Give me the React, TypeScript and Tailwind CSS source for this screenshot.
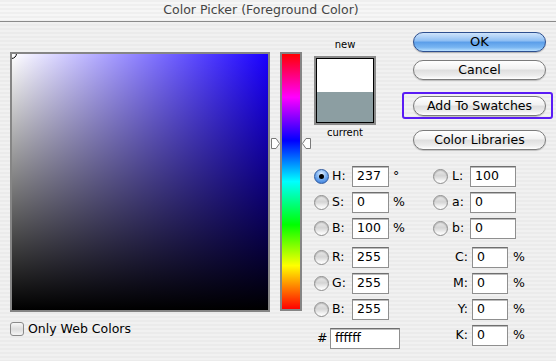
import React from "react";

function Radio({ checked }: { checked?: boolean }) {
  if (checked) {
    return (
      <span className="flex h-[15px] w-[15px] shrink-0 items-center justify-center rounded-full border border-[#2f5a9e] bg-[radial-gradient(circle_at_50%_30%,#e3f1ff,#6aa6ee_55%,#2c6cd1)]">
        <span className="h-[5px] w-[5px] rounded-full bg-black" />
      </span>
    );
  }
  return (
    <span className="h-[15px] w-[15px] shrink-0 rounded-full border border-[#8d8d8d] bg-[linear-gradient(180deg,#e9e9e9,#d4d4d4_45%,#f3f3f3_80%,#ffffff)] shadow-[inset_0_1px_1px_rgba(0,0,0,0.2)]" />
  );
}

function Input({ value, width }: { value: string; width: string }) {
  return (
    <div
      className={`flex h-full items-center border border-[#8f8f8f] border-t-[#6f6f6f] bg-white pl-[4px] shadow-[inset_0_1px_0_#bcbcbc] ${width}`}
    >
      {value}
    </div>
  );
}

function AquaButton({ label, primary }: { label: string; primary?: boolean }) {
  return (
    <div
      className={
        primary
          ? "flex h-[20px] w-[133px] items-center justify-center rounded-full border border-[#2d4f8f] bg-[linear-gradient(180deg,#cfe4fb,#8cbdf3_45%,#5a9de9_50%,#79b6f2_80%,#b8e0ff)] text-[13px] shadow-[0_1px_1px_rgba(0,0,0,0.25)]"
          : "flex h-[20px] w-[133px] items-center justify-center rounded-full border border-[#7b7b7b] bg-[linear-gradient(180deg,#ffffff,#f1f1f1_45%,#dedede_50%,#ececec_80%,#ffffff)] text-[12.5px] shadow-[0_1px_1px_rgba(0,0,0,0.2)]"
      }
    >
      {label}
    </div>
  );
}

export default function App() {
  const hsb = [
    { k: "H:", v: "237", u: "°", on: true },
    { k: "S:", v: "0", u: "%" },
    { k: "B:", v: "100", u: "%" },
  ];
  const rgb = [
    { k: "R:", v: "255" },
    { k: "G:", v: "255" },
    { k: "B:", v: "255" },
  ];
  const lab = [
    { k: "L:", v: "100" },
    { k: "a:", v: "0" },
    { k: "b:", v: "0" },
  ];
  const cmyk = ["C:", "M:", "Y:", "K:"];

  return (
    <div className="flex h-[361px] w-[556px] flex-col overflow-hidden bg-[repeating-linear-gradient(180deg,#ebebeb_0px,#ebebeb_2px,#f1f1f1_2px,#f1f1f1_4px)] font-['DejaVu_Sans',sans-serif] text-[12.5px] text-black">
      <div className="flex h-[22px] shrink-0 items-center justify-center border-b border-[#8a8a8a] bg-[repeating-linear-gradient(180deg,#efefef_0px,#efefef_2px,#f6f6f6_2px,#f6f6f6_4px)] pr-[34px] text-[12.5px] text-[#454545]">
        Color Picker (Foreground Color)
      </div>

      <div className="flex pl-[10px]">
        {/* colour field */}
        <div className="flex flex-col pt-[30px]">
          <div className="relative h-[260px] w-[260px] overflow-hidden border-2 border-[#858585] bg-[image:linear-gradient(180deg,rgba(0,0,0,0),#000),linear-gradient(90deg,#ffffff,#1a00ff)]">
            <span className="absolute -left-[6px] -top-[6px] h-[11px] w-[11px] rounded-full border border-black" />
          </div>
          <div className="mt-[8px] flex items-center gap-[4px]">
            <span className="h-[14px] w-[14px] rounded-[3px] border border-[#8a8a8a] bg-[linear-gradient(180deg,#f7f7f7,#dcdcdc_50%,#f5f5f5)]" />
            <span>Only Web Colors</span>
          </div>
        </div>

        {/* hue slider */}
        <div className="ml-[10px] pt-[30px]">
          <div className="relative h-[259px] w-[22px] border-2 border-[#858585] bg-[linear-gradient(180deg,#ff0000,#ff00ff_17%,#0000ff_34%,#00ffff_50%,#00ff00_67%,#ffff00_83%,#ff0000)]">
            <svg className="absolute -left-[11px] top-[84px]" width="9" height="11" viewBox="0 0 9 11">
              <path d="M0.5 0.5 L5 0.5 L8.5 5.5 L5 10.5 L0.5 10.5 Z" fill="#fff" stroke="#7a7a7a" />
            </svg>
            <svg className="absolute -right-[11px] top-[84px]" width="9" height="11" viewBox="0 0 9 11">
              <path d="M8.5 0.5 L4 0.5 L0.5 5.5 L4 10.5 L8.5 10.5 Z" fill="#fff" stroke="#7a7a7a" />
            </svg>
          </div>
        </div>

        {/* right area */}
        <div className="ml-[12px] flex flex-col">
          <div className="flex h-[128px]">
            <div className="flex w-[62px] flex-col items-center pt-[17px]">
              <span className="text-[10px] leading-[12px]">new</span>
              <div className="mt-[5px] flex h-[69px] w-[62px] flex-col border-2 border-[#8a8a8a]">
                <div className="flex flex-1 flex-col border border-black">
                  <div className="h-[33px] bg-white" />
                  <div className="flex-1 bg-[#8c9ea2]" />
                </div>
              </div>
              <span className="mt-[2px] text-[10px] leading-[12px]">current</span>
            </div>

            <div className="ml-[37px] flex flex-col pt-[10px]">
              <AquaButton label="OK" primary />
              <div className="mt-[8px]">
                <AquaButton label="Cancel" />
              </div>
              <div className="-ml-[11px] mt-[12px] rounded-[3px] border-2 border-[#5a1cf5] pb-[1px] pl-[9px] pr-[5px] pt-[2px]">
                <AquaButton label="Add To Swatches" />
              </div>
              <div className="mt-[11px]">
                <AquaButton label="Color Libraries" />
              </div>
            </div>
          </div>

          <div className="mt-[16px] flex">
            <div className="flex w-[119px] flex-col">
              <div className="flex flex-col gap-[5px]">
                {hsb.map((r) => (
                  <div key={r.k} className="flex h-[21px] items-center">
                    <Radio checked={r.on} />
                    <span className="ml-[3px] w-[20px]">{r.k}</span>
                    <Input value={r.v} width="w-[37px]" />
                    <span className="ml-[4px]">{r.u}</span>
                  </div>
                ))}
              </div>
              <div className="mt-[8px] flex flex-col gap-[5px]">
                {rgb.map((r) => (
                  <div key={r.k} className="flex h-[21px] items-center">
                    <Radio />
                    <span className="ml-[3px] w-[20px]">{r.k}</span>
                    <Input value={r.v} width="w-[37px]" />
                  </div>
                ))}
              </div>
              <div className="mt-[8px] flex h-[21px] items-center">
                <span className="ml-[3px] w-[13px]">#</span>
                <Input value="ffffff" width="w-[70px]" />
              </div>
            </div>

            <div className="flex flex-col">
              <div className="flex flex-col gap-[5px]">
                {lab.map((r) => (
                  <div key={r.k} className="flex h-[21px] items-center">
                    <Radio />
                    <span className="ml-[4px] w-[18px]">{r.k}</span>
                    <Input value={r.v} width="w-[46px]" />
                  </div>
                ))}
              </div>
              <div className="mt-[8px] flex flex-col gap-[5px]">
                {cmyk.map((k) => (
                  <div key={k} className="flex h-[21px] items-center">
                    <span className="w-[39px] pr-[4px] text-right">{k}</span>
                    <Input value="0" width="w-[36px]" />
                    <span className="ml-[5px]">%</span>
                  </div>
                ))}
              </div>
            </div>
          </div>
        </div>
      </div>
    </div>
  );
}
